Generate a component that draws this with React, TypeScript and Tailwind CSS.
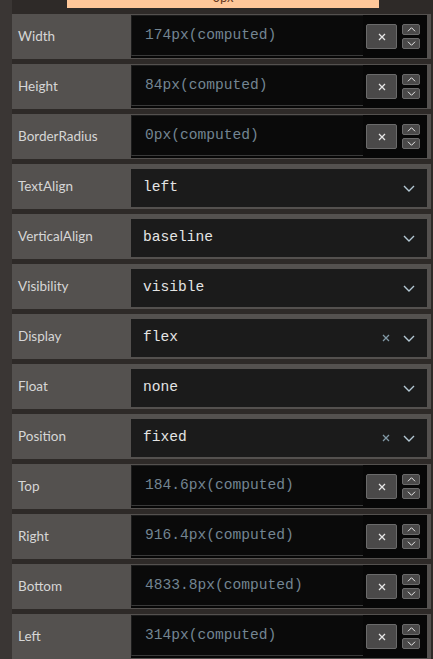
import React from "react";

type Row =
  | { label: string; kind: "input"; value: string }
  | { label: string; kind: "select"; value: string; clear?: boolean };

const rows: Row[] = [
  { label: "Width", kind: "input", value: "174px(computed)" },
  { label: "Height", kind: "input", value: "84px(computed)" },
  { label: "BorderRadius", kind: "input", value: "0px(computed)" },
  { label: "TextAlign", kind: "select", value: "left" },
  { label: "VerticalAlign", kind: "select", value: "baseline" },
  { label: "Visibility", kind: "select", value: "visible" },
  { label: "Display", kind: "select", value: "flex", clear: true },
  { label: "Float", kind: "select", value: "none" },
  { label: "Position", kind: "select", value: "fixed", clear: true },
  { label: "Top", kind: "input", value: "184.6px(computed)" },
  { label: "Right", kind: "input", value: "916.4px(computed)" },
  { label: "Bottom", kind: "input", value: "4833.8px(computed)" },
  { label: "Left", kind: "input", value: "314px(computed)" },
];

const Chevron = ({ up = false, className = "" }: { up?: boolean; className?: string }) => (
  <svg width="12" height="7" viewBox="0 0 12 7" className={className}>
    <path
      d={up ? "M1 6 L6 1 L11 6" : "M1 1 L6 6 L11 1"}
      fill="none"
      stroke="currentColor"
      strokeWidth="1.4"
    />
  </svg>
);

const Cross = ({ size = 8, className = "" }: { size?: number; className?: string }) => (
  <svg width={size} height={size} viewBox="0 0 8 8" className={className}>
    <path d="M1 1 L7 7 M7 1 L1 7" fill="none" stroke="currentColor" strokeWidth="1.3" />
  </svg>
);

function InputControl({ value }: { value: string }) {
  return (
    <div className="my-[1px] w-[296px] bg-[#070707] flex items-center">
      <div className="self-start h-[41px] w-[232px] bg-[#0a0a0a] border-l border-t border-[#1c1c1c] border-b border-b-[#3a3a3a] flex items-center pl-[13px] text-[14.6px] text-[#738592] [font-family:'Liberation_Mono',monospace]">
        {value}
      </div>
      <div className="ml-[3px] w-[31px] h-[25px] rounded-[2px] bg-[#4a4949] border border-[#6a6a6a] flex items-center justify-center text-[#e6e6e6]">
        <Cross size={8} />
      </div>
      <div className="ml-[5px] flex flex-col gap-[3px]">
        <div className="w-[18px] h-[11px] rounded-[2px] bg-[#4a4949] border border-[#6a6a6a] flex items-center justify-center text-[#e6e6e6]">
          <Chevron up className="w-[9px] h-[5px]" />
        </div>
        <div className="w-[18px] h-[11px] rounded-[2px] bg-[#4a4949] border border-[#6a6a6a] flex items-center justify-center text-[#e6e6e6]">
          <Chevron className="w-[9px] h-[5px]" />
        </div>
      </div>
    </div>
  );
}

function SelectControl({ value, clear }: { value: string; clear?: boolean }) {
  return (
    <div className="mt-[5px] mb-[2px] w-[296px] bg-[#1b1b1b] flex items-center pl-[12px] pr-[12px]">
      <span className="flex-1 text-[14.6px] text-[#e4e4e4] [font-family:'Liberation_Mono',monospace]">
        {value}
      </span>
      {clear && <Cross size={8} className="text-[#8299a6] mr-[13px]" />}
      <Chevron className="text-[#b4c8d4]" />
    </div>
  );
}

export default function App() {
  return (
    <div className="w-[433px] h-[659px] bg-[#3a3634] flex overflow-hidden [font-family:Lato,'Noto_Sans',sans-serif]">
      <div className="w-[12px] shrink-0" />
      <div className="flex-1 bg-[#2e2a28] flex flex-col gap-[5px]">
        <div className="h-[9px] shrink-0">
          <div className="ml-[55px] w-[312px] h-[8px] bg-[#ffc799] overflow-hidden flex justify-center">
            <span className="-mt-[10px] text-[13px] leading-[14px] text-[#6b3a22]">0px</span>
          </div>
        </div>
        {rows.map((r) => (
          <div key={r.label} className="w-[419px] h-[45px] shrink-0 bg-[#54514f] flex">
            <div className="w-[119px] pl-[6px] flex items-center text-[13.5px] text-[#d6d6d6]">
              {r.label}
            </div>
            {r.kind === "input" ? (
              <InputControl value={r.value} />
            ) : (
              <SelectControl value={r.value} clear={r.clear} />
            )}
          </div>
        ))}
      </div>
    </div>
  );
}
